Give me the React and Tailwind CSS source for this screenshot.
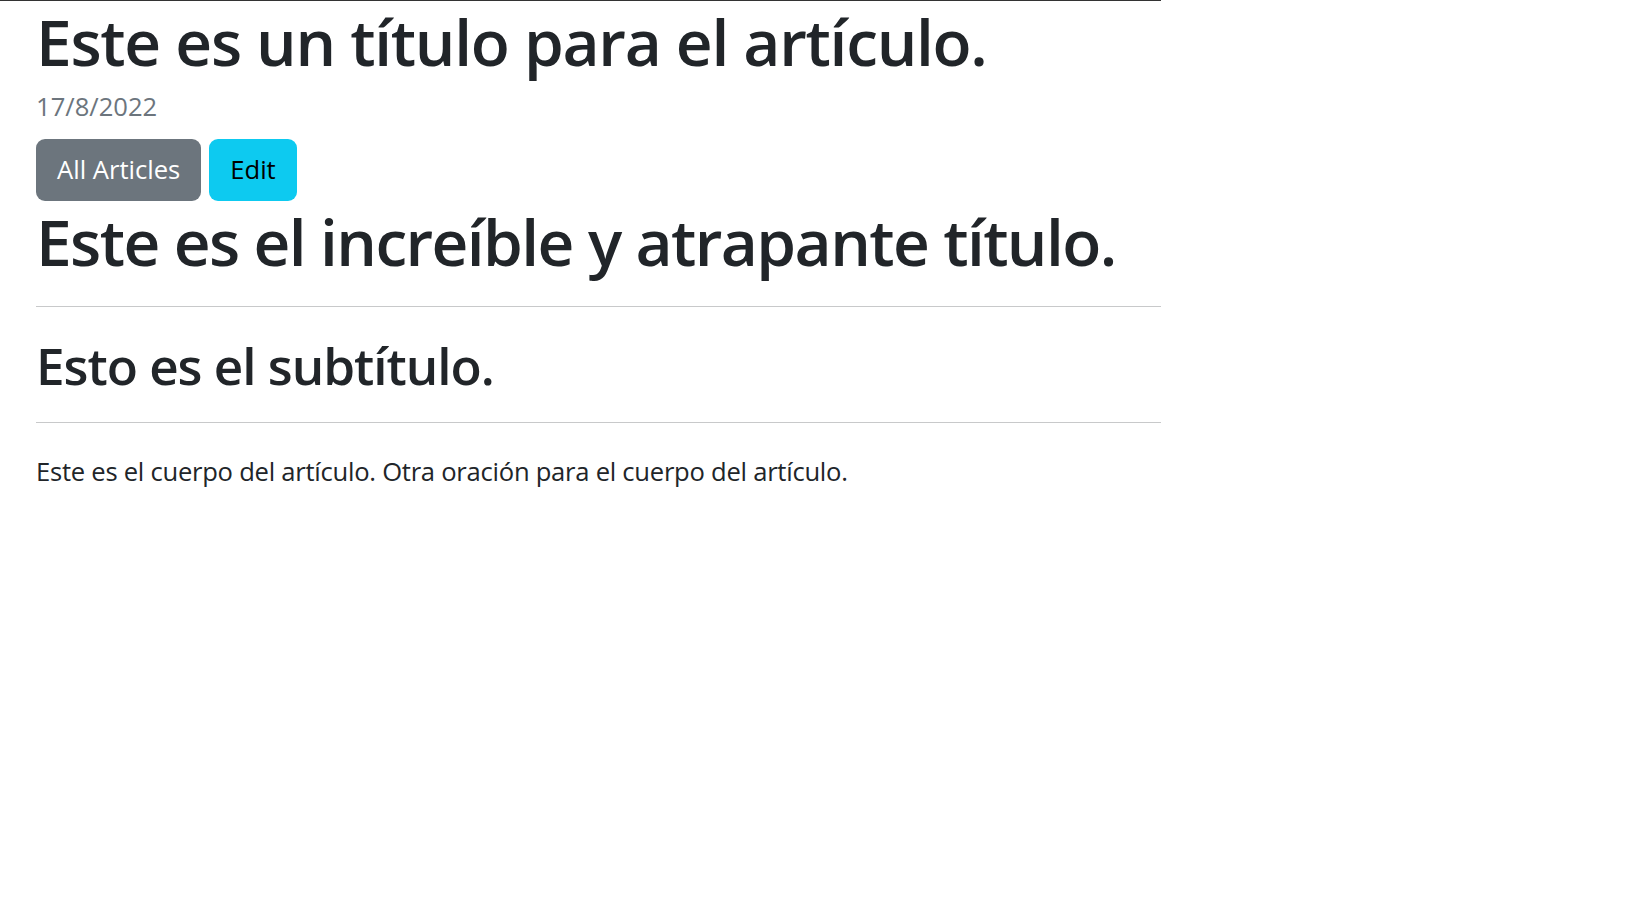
import React from 'react';

const App = () => {
  return (
    <div className="min-h-screen bg-white font-['Open_Sans',sans-serif] text-[#212529]">
      <div className="w-[1161px] border-t border-[#333333] pl-[36px]">
        {/* Title block */}
        <h1 className="mt-[2px] text-[64px] leading-[77px] font-semibold tracking-[-0.02em]">
          Este es un título para el artículo.
        </h1>
        <p className="mt-[8px] text-[25.6px] leading-[38.4px] text-[#6c757d]">17/8/2022</p>

        <div className="mt-[12.6px] flex gap-[8px]">
          <button className="h-[62px] rounded-[9px] bg-[#6c757d] px-[21px] text-[25.6px] leading-[38.4px] text-white">
            All Articles
          </button>
          <button className="h-[62px] rounded-[9px] bg-[#0dcaf0] px-[21px] text-[25.6px] leading-[38.4px] text-black">
            Edit
          </button>
        </div>

        {/* Article */}
        <h1 className="mt-[2px] text-[64px] leading-[77px] font-semibold tracking-[-0.025em]">
          Este es el increíble y atrapante título.
        </h1>
        <hr className="mt-[26px] border-t border-[#c8c9ca]" />
        <h2 className="mt-[28px] text-[51.2px] leading-[61.4px] font-semibold tracking-[-0.02em]">
          Esto es el subtítulo.
        </h2>
        <hr className="mt-[25.6px] border-t border-[#c8c9ca]" />
        <p className="mt-[30px] text-[25.6px] leading-[38.4px] tracking-[-0.01em]">
          Este es el cuerpo del artículo. Otra oración para el cuerpo del artículo.
        </p>
      </div>
    </div>
  );
};

export default App;
